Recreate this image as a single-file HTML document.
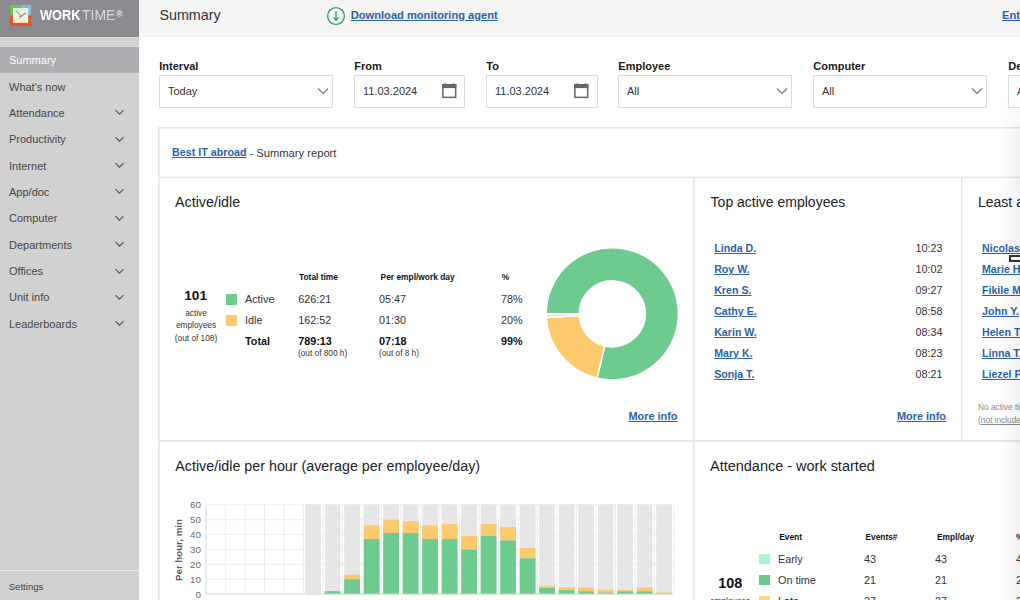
<!DOCTYPE html>
<html><head><meta charset="utf-8"><style>
html,body{margin:0;padding:0;width:1020px;height:600px;overflow:hidden;background:#fff;}
body{position:relative;font-family:"Liberation Sans",sans-serif;}
.t{position:absolute;white-space:nowrap;text-decoration-color:#5f88bd;}
.r{position:absolute;}
</style></head><body>
<div class="r" style="left:0px;top:0px;width:139px;height:37px;background:#898b91;"></div>
<div class="r" style="left:0px;top:37px;width:139px;height:563px;background:#d1d1d1;"></div>
<div class="r" style="left:0px;top:37px;width:139px;height:1px;background:#d9d9d9;"></div>
<div class="r" style="left:0px;top:46px;width:139px;height:1px;background:#d9d9d9;"></div>
<div class="r" style="left:0px;top:47px;width:139px;height:26px;background:#acadb0;"></div>
<svg class="r" style="left:0;top:0" width="139" height="37" viewBox="0 0 139 37">
<defs><linearGradient id="lg" x1="0" y1="0" x2="0" y2="1"><stop offset="0" stop-color="#e3f3dc"/><stop offset="0.6" stop-color="#edf5e6"/><stop offset="1" stop-color="#fbe8cf"/></linearGradient></defs>
<rect x="10.1" y="4.9" width="10.6" height="10.4" fill="#72c352"/>
<rect x="21.1" y="4.9" width="10.1" height="10.4" fill="#8db7e3"/>
<rect x="10.1" y="15.6" width="21.1" height="10.5" fill="#db5a2c"/>
<rect x="13" y="8" width="15.2" height="14.9" fill="url(#lg)"/>
<line x1="15.7" y1="10.4" x2="21.8" y2="16.8" stroke="#4d6e74" stroke-width="0.8"/>
<line x1="19" y1="17.6" x2="25.8" y2="13" stroke="#c9824a" stroke-width="1.2"/>
</svg>
<div class="t " style="left:39.60px;top:8.49px;font-size:14.9px;line-height:14.9px;color:#ffffff;font-weight:bold;transform:scaleX(0.86);transform-origin:0 0;">WORK</div>
<div class="t " style="left:81.90px;top:8.49px;font-size:14.9px;line-height:14.9px;color:#d9dadd;transform:scaleX(0.94);transform-origin:0 0;">TIME</div>
<div class="t " style="left:116.20px;top:10.00px;font-size:8.5px;line-height:8.5px;color:#e6e6e9;font-weight:bold;">&reg;</div>
<div class="t " style="left:9.00px;top:55.19px;font-size:11px;line-height:11px;color:#ffffff;">Summary</div>
<div class="t " style="left:9.00px;top:81.54px;font-size:11px;line-height:11px;color:#464646;">What's now</div>
<div class="t " style="left:9.00px;top:107.89px;font-size:11px;line-height:11px;color:#464646;">Attendance</div>
<svg class="r" style="left:114px;top:109.40px" width="11" height="7" viewBox="0 0 11 7"><polyline points="1.5,1.2 5.5,5.2 9.5,1.2" fill="none" stroke="#555" stroke-width="1.2"/></svg>
<div class="t " style="left:9.00px;top:134.24px;font-size:11px;line-height:11px;color:#464646;">Productivity</div>
<svg class="r" style="left:114px;top:135.75px" width="11" height="7" viewBox="0 0 11 7"><polyline points="1.5,1.2 5.5,5.2 9.5,1.2" fill="none" stroke="#555" stroke-width="1.2"/></svg>
<div class="t " style="left:9.00px;top:160.59px;font-size:11px;line-height:11px;color:#464646;">Internet</div>
<svg class="r" style="left:114px;top:162.10px" width="11" height="7" viewBox="0 0 11 7"><polyline points="1.5,1.2 5.5,5.2 9.5,1.2" fill="none" stroke="#555" stroke-width="1.2"/></svg>
<div class="t " style="left:9.00px;top:186.94px;font-size:11px;line-height:11px;color:#464646;">App/doc</div>
<svg class="r" style="left:114px;top:188.45px" width="11" height="7" viewBox="0 0 11 7"><polyline points="1.5,1.2 5.5,5.2 9.5,1.2" fill="none" stroke="#555" stroke-width="1.2"/></svg>
<div class="t " style="left:9.00px;top:213.29px;font-size:11px;line-height:11px;color:#464646;">Computer</div>
<svg class="r" style="left:114px;top:214.80px" width="11" height="7" viewBox="0 0 11 7"><polyline points="1.5,1.2 5.5,5.2 9.5,1.2" fill="none" stroke="#555" stroke-width="1.2"/></svg>
<div class="t " style="left:9.00px;top:239.64px;font-size:11px;line-height:11px;color:#464646;">Departments</div>
<svg class="r" style="left:114px;top:241.15px" width="11" height="7" viewBox="0 0 11 7"><polyline points="1.5,1.2 5.5,5.2 9.5,1.2" fill="none" stroke="#555" stroke-width="1.2"/></svg>
<div class="t " style="left:9.00px;top:265.99px;font-size:11px;line-height:11px;color:#464646;">Offices</div>
<svg class="r" style="left:114px;top:267.50px" width="11" height="7" viewBox="0 0 11 7"><polyline points="1.5,1.2 5.5,5.2 9.5,1.2" fill="none" stroke="#555" stroke-width="1.2"/></svg>
<div class="t " style="left:9.00px;top:292.34px;font-size:11px;line-height:11px;color:#464646;">Unit info</div>
<svg class="r" style="left:114px;top:293.85px" width="11" height="7" viewBox="0 0 11 7"><polyline points="1.5,1.2 5.5,5.2 9.5,1.2" fill="none" stroke="#555" stroke-width="1.2"/></svg>
<div class="t " style="left:9.00px;top:318.69px;font-size:11px;line-height:11px;color:#464646;">Leaderboards</div>
<svg class="r" style="left:114px;top:320.20px" width="11" height="7" viewBox="0 0 11 7"><polyline points="1.5,1.2 5.5,5.2 9.5,1.2" fill="none" stroke="#555" stroke-width="1.2"/></svg>
<div class="r" style="left:0px;top:570px;width:139px;height:1.3px;background:#eaeaea;"></div>
<div class="t " style="left:8.70px;top:581.87px;font-size:9.6px;line-height:9.6px;color:#464646;">Settings</div>
<div class="r" style="left:139px;top:0px;width:881px;height:37px;background:#f4f4f4;"></div>
<div class="t " style="left:159.40px;top:8.29px;font-size:14.31px;line-height:14.31px;color:#333;">Summary</div>
<svg class="r" style="left:326px;top:5.5px" width="20" height="20" viewBox="0 0 20 20"><circle cx="10" cy="10" r="8.4" fill="none" stroke="#2e9f5f" stroke-width="1.4"/><line x1="10" y1="5.3" x2="10" y2="14.3" stroke="#2e9f5f" stroke-width="1.3"/><polyline points="7.6,11.6 10,14.3 12.4,11.6" fill="none" stroke="#2e9f5f" stroke-width="1.3"/></svg>
<div class="t " style="left:350.80px;top:10.19px;font-size:11.12px;line-height:11.12px;color:#2a62a8;font-weight:bold;text-decoration:underline;">Download monitoring agent</div>
<div class="t " style="left:1002.00px;top:10.19px;font-size:11.12px;line-height:11.12px;color:#2a62a8;font-weight:bold;text-decoration:underline;">Enterprise</div>
<div class="t " style="left:159.30px;top:60.79px;font-size:11px;line-height:11px;color:#1a1a1a;font-weight:bold;">Interval</div>
<div class="r" style="left:159px;top:75px;width:174px;height:33px;border:1px solid #dcdcdc;box-sizing:border-box;background:#fff"></div>
<div class="t " style="left:168.00px;top:85.69px;font-size:11px;line-height:11px;color:#333;">Today</div>
<svg class="r" style="left:317px;top:86.5px" width="12" height="8" viewBox="0 0 12 8"><polyline points="1,1.5 6,6.5 11,1.5" fill="none" stroke="#777" stroke-width="1.1"/></svg>
<div class="t " style="left:354.30px;top:60.79px;font-size:11px;line-height:11px;color:#1a1a1a;font-weight:bold;">From</div>
<div class="r" style="left:354px;top:75px;width:111px;height:33px;border:1px solid #dcdcdc;box-sizing:border-box;background:#fff"></div>
<div class="t " style="left:363.00px;top:85.69px;font-size:11px;line-height:11px;color:#333;">11.03.2024</div>
<svg class="r" style="left:434px;top:78px" width="26" height="26" viewBox="0 0 26 26"><rect x="8.85" y="6.85" width="12.8" height="12.5" fill="none" stroke="#666" stroke-width="1.5"/><rect x="8.1" y="6.1" width="14.3" height="4" fill="#666"/><rect x="10.8" y="5" width="1.3" height="1.5" fill="#777"/><rect x="18.8" y="5" width="1.3" height="1.5" fill="#777"/></svg>
<div class="t " style="left:486.30px;top:60.79px;font-size:11px;line-height:11px;color:#1a1a1a;font-weight:bold;">To</div>
<div class="r" style="left:486px;top:75px;width:112px;height:33px;border:1px solid #dcdcdc;box-sizing:border-box;background:#fff"></div>
<div class="t " style="left:495.00px;top:85.69px;font-size:11px;line-height:11px;color:#333;">11.03.2024</div>
<svg class="r" style="left:566px;top:78px" width="26" height="26" viewBox="0 0 26 26"><rect x="8.85" y="6.85" width="12.8" height="12.5" fill="none" stroke="#666" stroke-width="1.5"/><rect x="8.1" y="6.1" width="14.3" height="4" fill="#666"/><rect x="10.8" y="5" width="1.3" height="1.5" fill="#777"/><rect x="18.8" y="5" width="1.3" height="1.5" fill="#777"/></svg>
<div class="t " style="left:618.30px;top:60.79px;font-size:11px;line-height:11px;color:#1a1a1a;font-weight:bold;">Employee</div>
<div class="r" style="left:618px;top:75px;width:174px;height:33px;border:1px solid #dcdcdc;box-sizing:border-box;background:#fff"></div>
<div class="t " style="left:627.00px;top:85.69px;font-size:11px;line-height:11px;color:#333;">All</div>
<svg class="r" style="left:776px;top:86.5px" width="12" height="8" viewBox="0 0 12 8"><polyline points="1,1.5 6,6.5 11,1.5" fill="none" stroke="#777" stroke-width="1.1"/></svg>
<div class="t " style="left:813.30px;top:60.79px;font-size:11px;line-height:11px;color:#1a1a1a;font-weight:bold;">Computer</div>
<div class="r" style="left:813px;top:75px;width:174px;height:33px;border:1px solid #dcdcdc;box-sizing:border-box;background:#fff"></div>
<div class="t " style="left:822.00px;top:85.69px;font-size:11px;line-height:11px;color:#333;">All</div>
<svg class="r" style="left:971px;top:86.5px" width="12" height="8" viewBox="0 0 12 8"><polyline points="1,1.5 6,6.5 11,1.5" fill="none" stroke="#777" stroke-width="1.1"/></svg>
<div class="t " style="left:1008.30px;top:60.79px;font-size:11px;line-height:11px;color:#1a1a1a;font-weight:bold;">Department</div>
<div class="r" style="left:1008px;top:75px;width:174px;height:33px;border:1px solid #dcdcdc;box-sizing:border-box;background:#fff"></div>
<div class="t " style="left:1017.00px;top:85.69px;font-size:11px;line-height:11px;color:#333;">All</div>
<svg class="r" style="left:1166px;top:86.5px" width="12" height="8" viewBox="0 0 12 8"><polyline points="1,1.5 6,6.5 11,1.5" fill="none" stroke="#777" stroke-width="1.1"/></svg>
<div class="r" style="left:158px;top:127px;width:900px;height:1px;background:#e5e5e5;"></div>
<div class="r" style="left:158px;top:128px;width:900px;height:1px;background:#f3f3f3;"></div>
<div class="r" style="left:158px;top:127px;width:1px;height:500px;background:#e4e4e4;"></div>
<div class="r" style="left:159px;top:128px;width:1px;height:500px;background:#f2f2f2;"></div>
<div class="r" style="left:158px;top:176px;width:900px;height:1px;background:#f5f5f5;"></div>
<div class="r" style="left:158px;top:177px;width:900px;height:1px;background:#e5e5e5;"></div>
<div class="r" style="left:158px;top:440px;width:900px;height:1px;background:#e5e5e5;"></div>
<div class="r" style="left:158px;top:441px;width:900px;height:1px;background:#ededed;"></div>
<div class="r" style="left:693px;top:177px;width:1px;height:500px;background:#e5e5e5;"></div>
<div class="r" style="left:694px;top:177px;width:1px;height:500px;background:#f0f0f0;"></div>
<div class="r" style="left:961px;top:177px;width:1px;height:263px;background:#e5e5e5;"></div>
<div class="r" style="left:962px;top:177px;width:1px;height:263px;background:#f0f0f0;"></div>
<div class="t " style="left:172.00px;top:146.62px;font-size:10.73px;line-height:10.73px;color:#2a62a8;font-weight:bold;text-decoration:underline;">Best IT abroad</div>
<div class="t " style="left:246.30px;top:147.72px;font-size:11.2px;line-height:11.2px;color:#333;white-space:pre;"> - Summary report</div>
<div class="t " style="left:175.00px;top:195.30px;font-size:14.3px;line-height:14.3px;color:#222;">Active/idle</div>
<div class="t " style="left:710.60px;top:195.35px;font-size:14.0px;line-height:14.0px;color:#222;">Top active employees</div>
<div class="t " style="left:978.00px;top:195.35px;font-size:14.0px;line-height:14.0px;color:#222;">Least active employees</div>
<div class="t " style="left:175.30px;top:458.90px;font-size:14.29px;line-height:14.29px;color:#222;">Active/idle per hour (average per employee/day)</div>
<div class="t " style="left:710.00px;top:458.74px;font-size:14.48px;line-height:14.48px;color:#222;">Attendance - work started</div>
<div class="t " style="left:184.20px;top:288.93px;font-size:13.67px;line-height:13.67px;color:#111;font-weight:bold;">101</div>
<div class="t" style="left:155px;width:82px;text-align:center;top:308.77px;font-size:8.3px;line-height:8.3px;color:#333">active</div>
<div class="t" style="left:155px;width:82px;text-align:center;top:321.47px;font-size:8.3px;line-height:8.3px;color:#333">employees</div>
<div class="t" style="left:155px;width:82px;text-align:center;top:333.67px;font-size:8.3px;line-height:8.3px;color:#333">(out of 108)</div>
<div class="r" style="left:226px;top:294px;width:11px;height:11px;background:#6dcb8f;"></div>
<div class="r" style="left:226px;top:315px;width:11px;height:11px;background:#fdc96d;"></div>
<div class="t " style="left:245.00px;top:293.86px;font-size:10.8px;line-height:10.8px;color:#333;">Active</div>
<div class="t " style="left:245.00px;top:315.06px;font-size:10.8px;line-height:10.8px;color:#333;">Idle</div>
<div class="t " style="left:245.00px;top:336.16px;font-size:10.8px;line-height:10.8px;color:#111;font-weight:bold;">Total</div>
<div class="t " style="left:299.00px;top:273.19px;font-size:8.4px;line-height:8.4px;color:#111;font-weight:bold;">Total time</div>
<div class="t " style="left:380.60px;top:273.19px;font-size:8.4px;line-height:8.4px;color:#111;font-weight:bold;">Per empl/work day</div>
<div class="t " style="left:501.80px;top:273.19px;font-size:8.4px;line-height:8.4px;color:#111;font-weight:bold;">%</div>
<div class="t " style="left:298.20px;top:293.96px;font-size:10.8px;line-height:10.8px;color:#333;">626:21</div>
<div class="t " style="left:298.20px;top:315.16px;font-size:10.8px;line-height:10.8px;color:#333;">162:52</div>
<div class="t " style="left:298.20px;top:335.86px;font-size:10.8px;line-height:10.8px;color:#111;font-weight:bold;">789:13</div>
<div class="t " style="left:379.00px;top:293.96px;font-size:10.8px;line-height:10.8px;color:#333;">05:47</div>
<div class="t " style="left:379.00px;top:315.16px;font-size:10.8px;line-height:10.8px;color:#333;">01:30</div>
<div class="t " style="left:379.00px;top:335.86px;font-size:10.8px;line-height:10.8px;color:#111;font-weight:bold;">07:18</div>
<div class="t " style="left:501.00px;top:293.96px;font-size:10.8px;line-height:10.8px;color:#333;">78%</div>
<div class="t " style="left:501.00px;top:315.16px;font-size:10.8px;line-height:10.8px;color:#333;">20%</div>
<div class="t " style="left:501.00px;top:335.86px;font-size:10.8px;line-height:10.8px;color:#111;font-weight:bold;">99%</div>
<div class="t " style="left:298.00px;top:350.30px;font-size:8.27px;line-height:8.27px;color:#333;">(out of 800 h)</div>
<div class="t " style="left:379.00px;top:350.30px;font-size:8.27px;line-height:8.27px;color:#333;">(out of 8 h)</div>
<svg class="r" style="left:0;top:0" width="1020" height="600"><path d="M546.30,313.80 A66.0,66.0 0 1 1 597.12,378.03 L604.69,346.01 A33.1,33.1 0 1 0 579.20,313.80 Z" fill="#6dcb8f" stroke="#fff" stroke-width="1.3"/><path d="M597.12,378.03 A66.0,66.0 0 0 1 546.41,317.60 L579.25,315.71 A33.1,33.1 0 0 0 604.69,346.01 Z" fill="#fdc96d" stroke="#fff" stroke-width="1.3"/><path d="M546.41,317.60 A66.0,66.0 0 0 1 546.30,313.80 L579.20,313.80 A33.1,33.1 0 0 0 579.25,315.71 Z" fill="#e6e6e6" stroke="#fff" stroke-width="1.3"/></svg>
<div class="t " style="left:628.50px;top:410.77px;font-size:10.9px;line-height:10.9px;color:#2a62a8;font-weight:bold;text-decoration:underline;">More info</div>
<div class="t " style="left:714.20px;top:243.08px;font-size:10.65px;line-height:10.65px;color:#2a62a8;font-weight:bold;text-decoration:underline;">Linda D.</div>
<div class="t" style="left:880px;width:62.5px;text-align:right;top:242.96px;font-size:10.8px;line-height:10.8px;color:#333">10:23</div>
<div class="t " style="left:982.00px;top:243.08px;font-size:10.65px;line-height:10.65px;color:#2a62a8;font-weight:bold;text-decoration:underline;">Nicolas R.</div>
<div class="t " style="left:714.20px;top:264.01px;font-size:10.65px;line-height:10.65px;color:#2a62a8;font-weight:bold;text-decoration:underline;">Roy W.</div>
<div class="t" style="left:880px;width:62.5px;text-align:right;top:263.89px;font-size:10.8px;line-height:10.8px;color:#333">10:02</div>
<div class="t " style="left:982.00px;top:264.01px;font-size:10.65px;line-height:10.65px;color:#2a62a8;font-weight:bold;text-decoration:underline;">Marie H.</div>
<div class="t " style="left:714.20px;top:284.94px;font-size:10.65px;line-height:10.65px;color:#2a62a8;font-weight:bold;text-decoration:underline;">Kren S.</div>
<div class="t" style="left:880px;width:62.5px;text-align:right;top:284.82px;font-size:10.8px;line-height:10.8px;color:#333">09:27</div>
<div class="t " style="left:982.00px;top:284.94px;font-size:10.65px;line-height:10.65px;color:#2a62a8;font-weight:bold;text-decoration:underline;">Fikile M.</div>
<div class="t " style="left:714.20px;top:305.87px;font-size:10.65px;line-height:10.65px;color:#2a62a8;font-weight:bold;text-decoration:underline;">Cathy E.</div>
<div class="t" style="left:880px;width:62.5px;text-align:right;top:305.75px;font-size:10.8px;line-height:10.8px;color:#333">08:58</div>
<div class="t " style="left:982.00px;top:305.87px;font-size:10.65px;line-height:10.65px;color:#2a62a8;font-weight:bold;text-decoration:underline;">John Y.</div>
<div class="t " style="left:714.20px;top:326.80px;font-size:10.65px;line-height:10.65px;color:#2a62a8;font-weight:bold;text-decoration:underline;">Karin W.</div>
<div class="t" style="left:880px;width:62.5px;text-align:right;top:326.68px;font-size:10.8px;line-height:10.8px;color:#333">08:34</div>
<div class="t " style="left:982.00px;top:326.80px;font-size:10.65px;line-height:10.65px;color:#2a62a8;font-weight:bold;text-decoration:underline;">Helen T.</div>
<div class="t " style="left:714.20px;top:347.73px;font-size:10.65px;line-height:10.65px;color:#2a62a8;font-weight:bold;text-decoration:underline;">Mary K.</div>
<div class="t" style="left:880px;width:62.5px;text-align:right;top:347.61px;font-size:10.8px;line-height:10.8px;color:#333">08:23</div>
<div class="t " style="left:982.00px;top:347.73px;font-size:10.65px;line-height:10.65px;color:#2a62a8;font-weight:bold;text-decoration:underline;">Linna T.</div>
<div class="t " style="left:714.20px;top:368.66px;font-size:10.65px;line-height:10.65px;color:#2a62a8;font-weight:bold;text-decoration:underline;">Sonja T.</div>
<div class="t" style="left:880px;width:62.5px;text-align:right;top:368.54px;font-size:10.8px;line-height:10.8px;color:#333">08:21</div>
<div class="t " style="left:982.00px;top:368.66px;font-size:10.65px;line-height:10.65px;color:#2a62a8;font-weight:bold;text-decoration:underline;">Liezel P.</div>
<div class="r" style="left:1009px;top:255px;width:14px;height:7px;border:2px solid #333;box-sizing:border-box;background:#fff"></div>
<div class="t " style="left:897.00px;top:410.77px;font-size:10.9px;line-height:10.9px;color:#2a62a8;font-weight:bold;text-decoration:underline;">More info</div>
<div class="t " style="left:978.00px;top:403.17px;font-size:8.3px;line-height:8.3px;color:#888;">No active time</div>
<div class="t " style="left:978.00px;top:415.77px;font-size:8.3px;line-height:8.3px;color:#888;">(<span style="text-decoration:underline">not included</span></div>
<svg class="r" style="left:0;top:0" width="1020" height="600"><rect x="305.20" y="504.70" width="15.8" height="89.40" fill="#e6e6e6"/><rect x="324.70" y="504.70" width="15.8" height="89.40" fill="#e6e6e6"/><rect x="344.20" y="504.70" width="15.8" height="89.40" fill="#e6e6e6"/><rect x="363.70" y="504.70" width="15.8" height="89.40" fill="#e6e6e6"/><rect x="383.20" y="504.70" width="15.8" height="89.40" fill="#e6e6e6"/><rect x="402.70" y="504.70" width="15.8" height="89.40" fill="#e6e6e6"/><rect x="422.20" y="504.70" width="15.8" height="89.40" fill="#e6e6e6"/><rect x="441.70" y="504.70" width="15.8" height="89.40" fill="#e6e6e6"/><rect x="461.20" y="504.70" width="15.8" height="89.40" fill="#e6e6e6"/><rect x="480.70" y="504.70" width="15.8" height="89.40" fill="#e6e6e6"/><rect x="500.20" y="504.70" width="15.8" height="89.40" fill="#e6e6e6"/><rect x="519.70" y="504.70" width="15.8" height="89.40" fill="#e6e6e6"/><rect x="539.20" y="504.70" width="15.8" height="89.40" fill="#e6e6e6"/><rect x="558.70" y="504.70" width="15.8" height="89.40" fill="#e6e6e6"/><rect x="578.20" y="504.70" width="15.8" height="89.40" fill="#e6e6e6"/><rect x="597.70" y="504.70" width="15.8" height="89.40" fill="#e6e6e6"/><rect x="617.20" y="504.70" width="15.8" height="89.40" fill="#e6e6e6"/><rect x="636.70" y="504.70" width="15.8" height="89.40" fill="#e6e6e6"/><rect x="656.20" y="504.70" width="15.8" height="89.40" fill="#e6e6e6"/><line x1="205.9" y1="594.10" x2="673.90" y2="594.10" stroke="#e8e8e8" stroke-width="1" opacity="0.8"/><line x1="205.9" y1="579.20" x2="673.90" y2="579.20" stroke="#e8e8e8" stroke-width="1" opacity="0.8"/><line x1="205.9" y1="564.30" x2="673.90" y2="564.30" stroke="#e8e8e8" stroke-width="1" opacity="0.8"/><line x1="205.9" y1="549.40" x2="673.90" y2="549.40" stroke="#e8e8e8" stroke-width="1" opacity="0.8"/><line x1="205.9" y1="534.50" x2="673.90" y2="534.50" stroke="#e8e8e8" stroke-width="1" opacity="0.8"/><line x1="205.9" y1="519.60" x2="673.90" y2="519.60" stroke="#e8e8e8" stroke-width="1" opacity="0.8"/><line x1="205.9" y1="504.70" x2="673.90" y2="504.70" stroke="#e8e8e8" stroke-width="1" opacity="0.8"/><line x1="205.90" y1="504.7" x2="205.90" y2="594.1" stroke="#e8e8e8" stroke-width="1" opacity="0.8"/><line x1="225.40" y1="504.7" x2="225.40" y2="594.1" stroke="#e8e8e8" stroke-width="1" opacity="0.8"/><line x1="244.90" y1="504.7" x2="244.90" y2="594.1" stroke="#e8e8e8" stroke-width="1" opacity="0.8"/><line x1="264.40" y1="504.7" x2="264.40" y2="594.1" stroke="#e8e8e8" stroke-width="1" opacity="0.8"/><line x1="283.90" y1="504.7" x2="283.90" y2="594.1" stroke="#e8e8e8" stroke-width="1" opacity="0.8"/><line x1="303.40" y1="504.7" x2="303.40" y2="594.1" stroke="#e8e8e8" stroke-width="1" opacity="0.8"/><line x1="322.90" y1="504.7" x2="322.90" y2="594.1" stroke="#e8e8e8" stroke-width="1" opacity="0.8"/><line x1="342.40" y1="504.7" x2="342.40" y2="594.1" stroke="#e8e8e8" stroke-width="1" opacity="0.8"/><line x1="361.90" y1="504.7" x2="361.90" y2="594.1" stroke="#e8e8e8" stroke-width="1" opacity="0.8"/><line x1="381.40" y1="504.7" x2="381.40" y2="594.1" stroke="#e8e8e8" stroke-width="1" opacity="0.8"/><line x1="400.90" y1="504.7" x2="400.90" y2="594.1" stroke="#e8e8e8" stroke-width="1" opacity="0.8"/><line x1="420.40" y1="504.7" x2="420.40" y2="594.1" stroke="#e8e8e8" stroke-width="1" opacity="0.8"/><line x1="439.90" y1="504.7" x2="439.90" y2="594.1" stroke="#e8e8e8" stroke-width="1" opacity="0.8"/><line x1="459.40" y1="504.7" x2="459.40" y2="594.1" stroke="#e8e8e8" stroke-width="1" opacity="0.8"/><line x1="478.90" y1="504.7" x2="478.90" y2="594.1" stroke="#e8e8e8" stroke-width="1" opacity="0.8"/><line x1="498.40" y1="504.7" x2="498.40" y2="594.1" stroke="#e8e8e8" stroke-width="1" opacity="0.8"/><line x1="517.90" y1="504.7" x2="517.90" y2="594.1" stroke="#e8e8e8" stroke-width="1" opacity="0.8"/><line x1="537.40" y1="504.7" x2="537.40" y2="594.1" stroke="#e8e8e8" stroke-width="1" opacity="0.8"/><line x1="556.90" y1="504.7" x2="556.90" y2="594.1" stroke="#e8e8e8" stroke-width="1" opacity="0.8"/><line x1="576.40" y1="504.7" x2="576.40" y2="594.1" stroke="#e8e8e8" stroke-width="1" opacity="0.8"/><line x1="595.90" y1="504.7" x2="595.90" y2="594.1" stroke="#e8e8e8" stroke-width="1" opacity="0.8"/><line x1="615.40" y1="504.7" x2="615.40" y2="594.1" stroke="#e8e8e8" stroke-width="1" opacity="0.8"/><line x1="634.90" y1="504.7" x2="634.90" y2="594.1" stroke="#e8e8e8" stroke-width="1" opacity="0.8"/><line x1="654.40" y1="504.7" x2="654.40" y2="594.1" stroke="#e8e8e8" stroke-width="1" opacity="0.8"/><line x1="673.90" y1="504.7" x2="673.90" y2="594.1" stroke="#e8e8e8" stroke-width="1" opacity="0.8"/><rect x="324.70" y="591.12" width="15.80" height="0.00" fill="#fdc96d"/><rect x="324.70" y="591.12" width="15.80" height="2.98" fill="#6dcb8f"/><rect x="344.20" y="574.73" width="15.80" height="4.47" fill="#fdc96d"/><rect x="344.20" y="579.20" width="15.80" height="14.90" fill="#6dcb8f"/><rect x="363.70" y="525.56" width="15.80" height="13.41" fill="#fdc96d"/><rect x="363.70" y="538.97" width="15.80" height="55.13" fill="#6dcb8f"/><rect x="383.20" y="519.60" width="15.80" height="13.41" fill="#fdc96d"/><rect x="383.20" y="533.01" width="15.80" height="61.09" fill="#6dcb8f"/><rect x="402.70" y="521.09" width="15.80" height="11.92" fill="#fdc96d"/><rect x="402.70" y="533.01" width="15.80" height="61.09" fill="#6dcb8f"/><rect x="422.20" y="525.56" width="15.80" height="13.41" fill="#fdc96d"/><rect x="422.20" y="538.97" width="15.80" height="55.13" fill="#6dcb8f"/><rect x="441.70" y="524.07" width="15.80" height="14.90" fill="#fdc96d"/><rect x="441.70" y="538.97" width="15.80" height="55.13" fill="#6dcb8f"/><rect x="461.20" y="535.99" width="15.80" height="13.41" fill="#fdc96d"/><rect x="461.20" y="549.40" width="15.80" height="44.70" fill="#6dcb8f"/><rect x="480.70" y="524.07" width="15.80" height="11.92" fill="#fdc96d"/><rect x="480.70" y="535.99" width="15.80" height="58.11" fill="#6dcb8f"/><rect x="500.20" y="527.05" width="15.80" height="13.41" fill="#fdc96d"/><rect x="500.20" y="540.46" width="15.80" height="53.64" fill="#6dcb8f"/><rect x="519.70" y="547.91" width="15.80" height="10.43" fill="#fdc96d"/><rect x="519.70" y="558.34" width="15.80" height="35.76" fill="#6dcb8f"/><rect x="539.20" y="586.20" width="15.80" height="1.64" fill="#fdc96d"/><rect x="539.20" y="587.84" width="15.80" height="6.26" fill="#6dcb8f"/><rect x="558.70" y="587.54" width="15.80" height="2.53" fill="#fdc96d"/><rect x="558.70" y="590.08" width="15.80" height="4.02" fill="#6dcb8f"/><rect x="578.20" y="587.54" width="15.80" height="3.73" fill="#fdc96d"/><rect x="578.20" y="591.27" width="15.80" height="2.83" fill="#6dcb8f"/><rect x="597.70" y="589.93" width="15.80" height="2.68" fill="#fdc96d"/><rect x="597.70" y="592.61" width="15.80" height="1.49" fill="#6dcb8f"/><rect x="617.20" y="589.93" width="15.80" height="1.34" fill="#fdc96d"/><rect x="617.20" y="591.27" width="15.80" height="2.83" fill="#6dcb8f"/><rect x="636.70" y="587.54" width="15.80" height="3.73" fill="#fdc96d"/><rect x="636.70" y="591.27" width="15.80" height="2.83" fill="#6dcb8f"/><rect x="656.20" y="592.46" width="15.80" height="0.89" fill="#fdc96d"/><rect x="656.20" y="593.36" width="15.80" height="0.75" fill="#6dcb8f"/><line x1="205.9" y1="504.7" x2="205.9" y2="594.1" stroke="#dcdcdc" stroke-width="1"/><line x1="205.9" y1="594.1" x2="673.90" y2="594.1" stroke="#dcdcdc" stroke-width="1"/></svg>
<div class="t" style="left:170px;width:31px;text-align:right;top:589.60px;font-size:9.8px;line-height:9.8px;color:#6a6a6a">0</div>
<div class="t" style="left:170px;width:31px;text-align:right;top:574.70px;font-size:9.8px;line-height:9.8px;color:#6a6a6a">10</div>
<div class="t" style="left:170px;width:31px;text-align:right;top:559.80px;font-size:9.8px;line-height:9.8px;color:#6a6a6a">20</div>
<div class="t" style="left:170px;width:31px;text-align:right;top:544.90px;font-size:9.8px;line-height:9.8px;color:#6a6a6a">30</div>
<div class="t" style="left:170px;width:31px;text-align:right;top:530.00px;font-size:9.8px;line-height:9.8px;color:#6a6a6a">40</div>
<div class="t" style="left:170px;width:31px;text-align:right;top:515.10px;font-size:9.8px;line-height:9.8px;color:#6a6a6a">50</div>
<div class="t" style="left:170px;width:31px;text-align:right;top:500.20px;font-size:9.8px;line-height:9.8px;color:#6a6a6a">60</div>
<div class="t" style="left:179px;top:550px;font-size:9.7px;line-height:9.7px;font-weight:bold;color:#555;transform:translate(-50%,-50%) rotate(-90deg);white-space:nowrap">Per hour, min</div>
<div class="t " style="left:779.20px;top:533.29px;font-size:8.4px;line-height:8.4px;color:#111;font-weight:bold;">Event</div>
<div class="t " style="left:865.40px;top:533.29px;font-size:8.4px;line-height:8.4px;color:#111;font-weight:bold;">Events#</div>
<div class="t " style="left:937.00px;top:533.29px;font-size:8.4px;line-height:8.4px;color:#111;font-weight:bold;">Empl/day</div>
<div class="t " style="left:1016.00px;top:533.29px;font-size:8.4px;line-height:8.4px;color:#111;font-weight:bold;">%</div>
<div class="r" style="left:759px;top:553.5px;width:11px;height:10.5px;background:#a9f3cd;"></div>
<div class="r" style="left:759px;top:574.5px;width:11px;height:10.5px;background:#6dc88f;"></div>
<div class="r" style="left:759px;top:596px;width:11px;height:10.5px;background:#fcd77b;"></div>
<div class="t " style="left:778.00px;top:554.06px;font-size:10.8px;line-height:10.8px;color:#333;">Early</div>
<div class="t " style="left:778.00px;top:575.06px;font-size:10.8px;line-height:10.8px;color:#333;">On time</div>
<div class="t " style="left:778.00px;top:596.06px;font-size:10.8px;line-height:10.8px;color:#222;">Late</div>
<div class="t " style="left:864.00px;top:554.06px;font-size:10.8px;line-height:10.8px;color:#333;">43</div>
<div class="t " style="left:864.00px;top:575.06px;font-size:10.8px;line-height:10.8px;color:#333;">21</div>
<div class="t " style="left:864.00px;top:596.06px;font-size:10.8px;line-height:10.8px;color:#333;">27</div>
<div class="t " style="left:935.00px;top:554.06px;font-size:10.8px;line-height:10.8px;color:#333;">43</div>
<div class="t " style="left:935.00px;top:575.06px;font-size:10.8px;line-height:10.8px;color:#333;">21</div>
<div class="t " style="left:935.00px;top:596.06px;font-size:10.8px;line-height:10.8px;color:#333;">27</div>
<div class="t " style="left:1016.00px;top:554.06px;font-size:10.8px;line-height:10.8px;color:#333;">40</div>
<div class="t " style="left:1016.00px;top:575.06px;font-size:10.8px;line-height:10.8px;color:#333;">20</div>
<div class="t " style="left:1016.00px;top:596.06px;font-size:10.8px;line-height:10.8px;color:#333;">25</div>
<div class="t " style="left:718.30px;top:576.21px;font-size:14.4px;line-height:14.4px;color:#111;font-weight:bold;">108</div>
<div class="t" style="left:690px;width:80px;text-align:center;top:596.77px;font-size:8.3px;line-height:8.3px;color:#333">employees</div>
<div class="r" style="left:1000px;top:95px;width:20px;height:505px;background:linear-gradient(to right,rgba(0,0,0,0),rgba(0,0,0,0.055));-webkit-mask-image:linear-gradient(to bottom,transparent,#000 45px)"></div>
</body></html>
